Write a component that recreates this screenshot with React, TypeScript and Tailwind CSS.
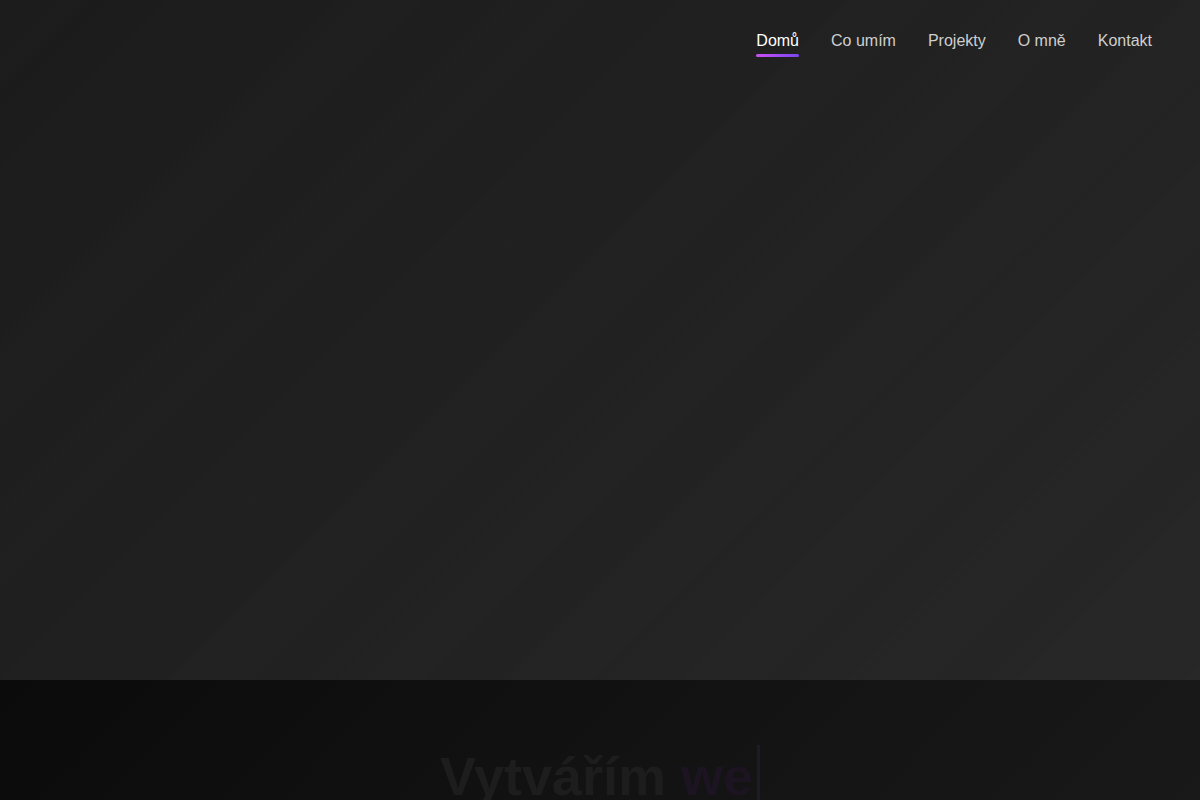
import { useState } from "react";

const navItems = ["Domů", "Co umím", "Projekty", "O mně", "Kontakt"];

function Header() {
	const [active, setActive] = useState("Domů");

	return (
		<header className="flex h-20 items-center justify-end px-12 pt-[2px]">
			<nav className="flex items-center gap-8">
				{navItems.map((item) => (
					<a
						key={item}
						href="#"
						onClick={(e) => {
							e.preventDefault();
							setActive(item);
						}}
						className={`relative text-base leading-6 ${
							active === item ? "text-white" : "text-[#cfcfcf]"
						}`}
					>
						{item}
						{active === item && (
							<span className="absolute left-0 right-0 -bottom-[4px] h-[3px] rounded-full bg-gradient-to-r from-[#c94ff2] to-[#7a44f0]" />
						)}
					</a>
				))}
			</nav>
		</header>
	);
}

export default function App() {
	return (
		<div className="font-['Liberation_Sans',Arial,sans-serif]">
			{/* Hero */}
			<section className="flex h-[680px] flex-col bg-[image:repeating-linear-gradient(135deg,rgba(255,255,255,0.004)_0px,rgba(255,255,255,0.004)_60px,transparent_60px,transparent_120px),linear-gradient(135deg,#1b1b1b_0%,#272727_100%)]">
				<Header />
			</section>

			<section className="min-h-[800px] bg-[image:linear-gradient(135deg,#0b0b0b_0%,#202020_100%)] pt-[64px]">
				<h1 className="flex items-start justify-center text-[54px] font-bold leading-[1.2] tracking-normal">
					<span className="text-[#1d1d1d]">Vytvářím&nbsp;</span>
					<span className="text-[#1c1421]">we</span>
					<span className="ml-[4px] mt-[1px] inline-block h-[62px] w-[3px] bg-[#201a25]" />
				</h1>
			</section>
		</div>
	);
}
